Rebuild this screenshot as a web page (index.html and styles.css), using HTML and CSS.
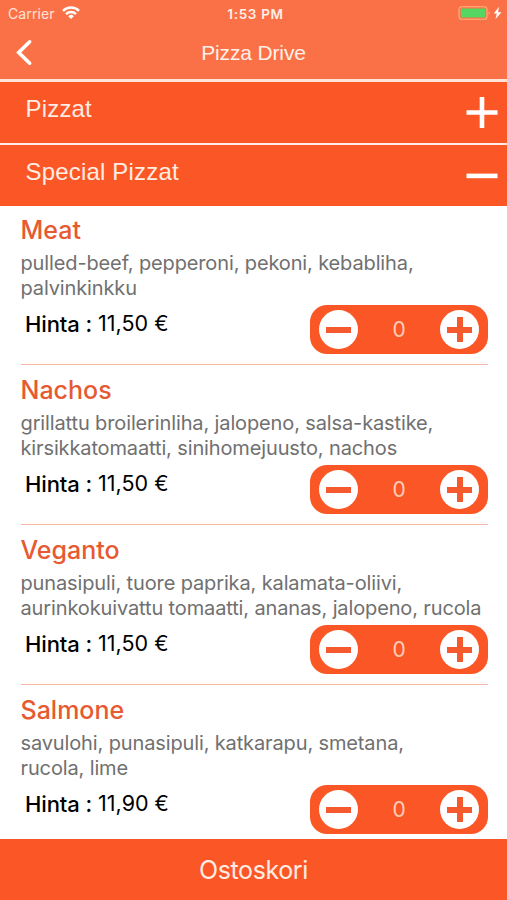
FILE: index.html
```html
<!DOCTYPE html>
<html lang="fi">
<head>
<meta charset="utf-8">
<title>Pizza Drive</title>
<link rel="stylesheet" href="styles.css">
</head>
<body>
<div class="app">
  <header class="top">
    <div class="status">
      <div class="carrier"><span>Carrier</span>
        <svg width="18" height="14" viewBox="0 0 18 14" fill="none" stroke="#fff" stroke-width="2.4"><path d="M1 4.8a11.3 11.3 0 0 1 16 0M4 8.1a7 7 0 0 1 10 0"/><path d="M6.2 10.2a4 4 0 0 1 5.6 0L9 13z" fill="#fff" stroke="none"/></svg>
      </div>
      <div class="clock">1:53 PM</div>
      <div class="power">
        <svg width="45" height="16" viewBox="0 0 45 16"><rect x="1" y="1.7" width="28" height="12.6" rx="2.8" fill="none" stroke="#ffb27e" stroke-width="1.1"/><rect x="2.8" y="3.5" width="24.4" height="9" rx="1" fill="#55d562"/><path d="M30.7 6q2 2 0 4z" fill="#ffb493"/><path d="M41 1.8l-5.2 6.8h3l-1.3 5.4L43.5 7.3h-3.4z" fill="#fff"/></svg>
      </div>
    </div>
    <div class="nav">
      <svg class="back" width="18" height="28" viewBox="0 0 18 28" fill="none" stroke="#fff" stroke-width="3.6" stroke-linecap="round"><path d="M14.7 2.8L3.7 13.5l11 10.7"/></svg>
      <h1>Pizza Drive</h1>
    </div>
  </header>
  <section class="category">
    <h2>Pizzat</h2>
    <svg width="32" height="32" viewBox="0 0 32 32" stroke="#fff" stroke-width="4.6"><path d="M.5 15.5h31M16 0v31"/></svg>
  </section>
  <section class="category open">
    <h2>Special Pizzat</h2>
    <svg width="32" height="32" viewBox="0 0 32 32" stroke="#fff" stroke-width="4.6"><path d="M.5 15.9h31"/></svg>
  </section>
  <main class="menu">
    <article class="item">
      <h3>Meat</h3>
      <p>pulled-beef, pepperoni, pekoni, kebabliha,<br>palvinkinkku</p>
      <div class="order">
        <div class="price"><b>Hinta :</b><span>11,50 €</span></div>
        <div class="stepper"><span class="round"></span><span class="count">0</span><span class="round plus"></span></div>
      </div>
    </article>
    <article class="item">
      <h3>Nachos</h3>
      <p>grillattu broilerinliha, jalopeno, salsa-kastike,<br>kirsikkatomaatti, sinihomejuusto, nachos</p>
      <div class="order">
        <div class="price"><b>Hinta :</b><span>11,50 €</span></div>
        <div class="stepper"><span class="round"></span><span class="count">0</span><span class="round plus"></span></div>
      </div>
    </article>
    <article class="item">
      <h3>Veganto</h3>
      <p>punasipuli, tuore paprika, kalamata-oliivi,<br>aurinkokuivattu tomaatti, ananas, jalopeno, rucola</p>
      <div class="order">
        <div class="price"><b>Hinta :</b><span>11,50 €</span></div>
        <div class="stepper"><span class="round"></span><span class="count">0</span><span class="round plus"></span></div>
      </div>
    </article>
    <article class="item">
      <h3>Salmone</h3>
      <p>savulohi, punasipuli, katkarapu, smetana,<br>rucola, lime</p>
      <div class="order">
        <div class="price"><b>Hinta :</b><span>11,90 €</span></div>
        <div class="stepper"><span class="round"></span><span class="count">0</span><span class="round plus"></span></div>
      </div>
    </article>
  </main>
  <footer class="cart">Ostoskori</footer>
</div>
</body>
</html>
```
FILE: styles.css
```css
* { box-sizing: border-box; }
body { margin: 0; font-family: Inter, "Liberation Sans", sans-serif; background: #fff; }
h1, h2, h3, p { margin: 0; font-weight: 400; }
svg { display: block; }
.app { height: 900px; display: flex; flex-direction: column; overflow: hidden; }

.top { flex: none; height: 82px; background: #fb7147; border-bottom: 3px solid #ffe3d6; color: #fff; }
.status { height: 27px; display: grid; grid-template-columns: 1fr auto 1fr; align-items: center; padding: 0 4px 0 8px; font-size: 14px; }
.carrier { display: flex; align-items: center; gap: 7px; color: #ffe3d8; letter-spacing: 0.1px; }
.carrier svg { margin-top: -2px; }
.clock { font-weight: 600; font-size: 13.5px; letter-spacing: 0.7px; color: #fff0e8; }
.power { justify-self: end; margin-top: -1px; }
.nav { height: 51px; display: grid; grid-template-columns: 60px 1fr 60px; align-items: center; }
.back { margin-left: 15px; }
h1 { font: 400 21px/24px "Liberation Sans", sans-serif; letter-spacing: -0.15px; text-align: center; color: #fff0e8; }

.category { flex: none; height: 63px; padding: 0 9px 0 25.5px; background: #fb5726; border-bottom: 2px solid #ffece2; display: flex; justify-content: space-between; align-items: center; color: #ffece2; }
.category.open { height: 61px; border-bottom: 0; }
h2 { font: 400 24px/28px "Liberation Sans", sans-serif; letter-spacing: 0.18px; padding-bottom: 7px; }

.menu { flex: 1; min-height: 0; overflow: hidden; padding: 0 19px 0 20.5px; }
.item { height: 160px; padding-top: 10px; border-bottom: 1px solid #f9b8a5; }
.item:first-child { height: 159px; padding-top: 9px; }
h3 { font-size: 25px; line-height: 30px; font-weight: 500; color: #e65a31; }
.item p { margin-top: 6px; font-size: 20px; line-height: 24.5px; letter-spacing: -0.13px; color: #707070; white-space: nowrap; }
.order { display: flex; justify-content: space-between; margin-top: 5px; }
.price { display: flex; gap: 6px; padding: 5px 0 0 4.5px; font-size: 21.5px; line-height: 27px; color: #000; }
.price b { font-weight: 500; font-size: 22px; line-height: 28px; letter-spacing: -0.1px; }
.stepper { width: 178px; height: 49px; border-radius: 17px; background: #fb5726; display: flex; align-items: center; justify-content: space-between; padding: 0 9px; }
.round { width: 39px; height: 39px; border-radius: 50%; background: linear-gradient(#f45a2d, #f45a2d) center / 25px 6px no-repeat #fff; }
.plus { background: linear-gradient(#f45a2d, #f45a2d) center / 25px 6px no-repeat, linear-gradient(#f45a2d, #f45a2d) center / 6px 25px no-repeat #fff; }
.count { font-size: 21px; color: #ffcdb9; }
.cart { flex: none; height: 61px; background: #fb5726; color: #ffece2; font-size: 25px; line-height: 62px; letter-spacing: -0.4px; text-align: center; }
```
